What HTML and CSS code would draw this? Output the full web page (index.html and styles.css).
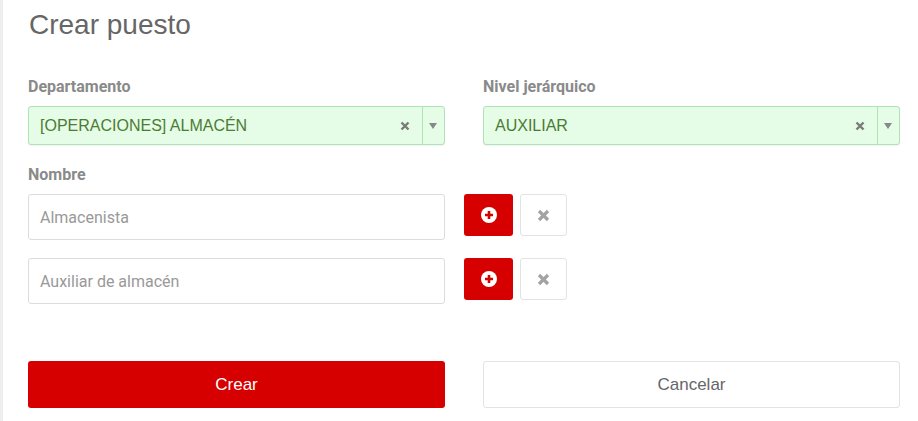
FILE: index.html
```html
<!DOCTYPE html>
<html lang="es">
<head>
    <meta charset="UTF-8">
    <meta name="viewport" content="width=device-width, initial-scale=1.0">
    <title>Crear puesto</title>
    <link rel="stylesheet" href="styles.css">
</head>
<body>
    <div class="panel">
        <h1>Crear puesto</h1>

        <div class="row">
            <div class="field">
                <label>Departamento</label>
                <div class="select">
                    <span class="select-value">[OPERACIONES] ALMACÉN</span>
                    <svg class="select-clear" width="10" height="10" viewBox="0 0 10 10"><path d="M1.5 1.5l7 7M8.5 1.5l-7 7" stroke="#7a7a7a" stroke-width="2.4"/></svg>
                    <span class="select-arrow"></span>
                </div>
            </div>
            <div class="field">
                <label>Nivel jerárquico</label>
                <div class="select">
                    <span class="select-value">AUXILIAR</span>
                    <svg class="select-clear" width="10" height="10" viewBox="0 0 10 10"><path d="M1.5 1.5l7 7M8.5 1.5l-7 7" stroke="#7a7a7a" stroke-width="2.4"/></svg>
                    <span class="select-arrow"></span>
                </div>
            </div>
        </div>

        <div class="names">
            <label>Nombre</label>
            <div class="name-row">
                <input type="text" placeholder="Almacenista">
                <button class="btn-add">
                    <svg width="16" height="16" viewBox="0 0 16 16"><circle cx="8" cy="8" r="8" fill="#fff"/><path d="M8 4v8M4 8h8" stroke="#d60000" stroke-width="2.6"/></svg>
                </button>
                <button class="btn-remove">
                    <svg width="13" height="13" viewBox="0 0 13 13"><path d="M2 2l9 9M11 2l-9 9" stroke="#a3a3a3" stroke-width="3.2"/></svg>
                </button>
            </div>
            <div class="name-row">
                <input type="text" placeholder="Auxiliar de almacén">
                <button class="btn-add">
                    <svg width="16" height="16" viewBox="0 0 16 16"><circle cx="8" cy="8" r="8" fill="#fff"/><path d="M8 4v8M4 8h8" stroke="#d60000" stroke-width="2.6"/></svg>
                </button>
                <button class="btn-remove">
                    <svg width="13" height="13" viewBox="0 0 13 13"><path d="M2 2l9 9M11 2l-9 9" stroke="#a3a3a3" stroke-width="3.2"/></svg>
                </button>
            </div>
        </div>

        <div class="row actions">
            <button class="btn-primary">Crear</button>
            <button class="btn-default">Cancelar</button>
        </div>
    </div>
</body>
</html>
```

FILE: styles.css
```css
body {
    margin: 0;
    background: #fff;
    font-family: Roboto, "Liberation Sans", sans-serif;
}
.panel {
    border-left: 3px solid #eeeeee;
    padding: 8px 18px 13px 25px;
    min-height: 400px;
}
h1 {
    font-family: "Liberation Sans", Arial, sans-serif;
    font-weight: normal;
    font-size: 28px;
    color: #666;
    margin: 0 0 36px 1px;
    line-height: 34px;
}
label {
    display: block;
    font-weight: bold;
    font-size: 16px;
    color: #8a8a8a;
    margin-bottom: 10px;
    line-height: 18px;
}
.row {
    display: grid;
    grid-template-columns: 1fr 1fr;
    gap: 38px;
}
.select {
    display: flex;
    align-items: center;
    height: 39px;
    box-sizing: border-box;
    background: #e5fce6;
    border: 1px solid #ade3b5;
    border-radius: 3px;
    box-shadow: 0 1px 1px rgba(0,0,0,0.05);
}
.select-value {
    flex: 1;
    padding-left: 11px;
    font-family: "Liberation Sans", Arial, sans-serif;
    font-size: 16px;
    color: #4b7b35;
}
.select-clear {
    margin-right: 12px;
}
.select-arrow {
    width: 21px;
    height: 100%;
    border-left: 1px solid #ade3b5;
    position: relative;
}
.select-arrow::after {
    content: "";
    position: absolute;
    left: 6px;
    top: 16px;
    border-left: 4px solid transparent;
    border-right: 4px solid transparent;
    border-top: 6px solid #888;
}
.names {
    margin-top: 21px;
}
.name-row {
    display: flex;
    align-items: flex-start;
    margin-bottom: 18px;
}
.name-row input {
    width: 417px;
    height: 46px;
    box-sizing: border-box;
    border: 1px solid #dcdcdc;
    border-radius: 3px;
    padding: 0 11px;
    font-family: Roboto, sans-serif;
    font-size: 16px;
    color: #555;
    margin-right: 19px;
}
.name-row input::placeholder {
    color: #999;
}
.btn-add {
    width: 49px;
    height: 42px;
    background: #d60000;
    border: none;
    border-radius: 3px;
    display: flex;
    align-items: center;
    justify-content: center;
    margin-right: 7px;
}
.btn-remove {
    width: 47px;
    height: 42px;
    background: #fff;
    border: 1px solid #e3e3e3;
    border-radius: 3px;
    display: flex;
    align-items: center;
    justify-content: center;
}
.actions {
    margin-top: 57px;
}
.actions button {
    height: 47px;
    border-radius: 3px;
    font-family: "Liberation Sans", Arial, sans-serif;
    font-size: 17px;
}
.btn-primary {
    background: #d60000;
    color: #fff;
    border: none;
}
.btn-default {
    background: #fff;
    color: #666;
    border: 1px solid #e3e3e3;
}
```
